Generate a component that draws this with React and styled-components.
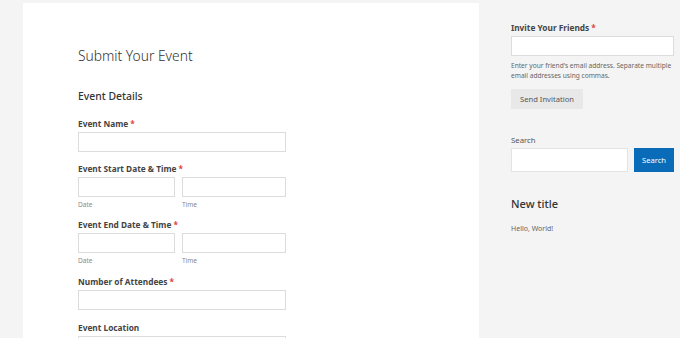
import React from "react";
import styled, { createGlobalStyle } from "styled-components";

const Global = createGlobalStyle`
  html, body { margin: 0; padding: 0; background: #f4f4f4; }
  body { font-family: "Noto Sans", "Open Sans", sans-serif; color: #333; }
  * { box-sizing: border-box; }
`;

const Page = styled.div`
  display: flex;
  height: 338px;
  overflow: hidden;
  padding: 3px 0 0 23px;
`;

const Main = styled.main`
  width: 456px;
  background: #fff;
  padding: 43px 0 0 55px;
`;

const Title = styled.h1`
  margin: 0;
  font-size: 13.8px;
  font-weight: 300;
  color: #333;
  line-height: 20px;
`;

const SectionTitle = styled.h2`
  margin: 22px 0 0;
  font-size: 10.4px;
  font-weight: 500;
  color: #333;
  line-height: 16px;
`;

const Field = styled.div`
  margin-top: ${(p) => p.$top || 11}px;
  width: 208px;
`;

const Label = styled.label`
  display: block;
  font-size: 8.3px;
  font-weight: 700;
  color: #444;
  line-height: 10px;
  margin-bottom: 3px;
`;

const Req = styled.span`
  color: #e0403a;
  margin-left: 2px;
`;

const Input = styled.div`
  height: 20px;
  width: ${(p) => p.$w || "100%"};
  background: #fff;
  border: 1px solid #dcdcdc;
`;

const Pair = styled.div`
  display: flex;
  gap: 7px;
`;

const Sub = styled.div`
  flex: ${(p) => (p.$grow ? "1" : "0 0 97px")};
`;

const Hint = styled.div`
  font-size: 6.5px;
  color: #8a8a8a;
  line-height: 9px;
  margin-top: 3px;
`;

const Side = styled.aside`
  padding: 20px 0 0 32px;
  width: 196px;
`;

const SideLabel = styled.div`
  font-size: 8.3px;
  font-weight: 700;
  color: #444;
  line-height: 10px;
  margin-bottom: 3px;
`;

const SideText = styled.p`
  margin: 5px 0 0;
  font-size: 6.6px;
  color: #666;
  line-height: 10px;
`;

const GrayButton = styled.button`
  margin-top: 8px;
  height: 20px;
  width: 72px;
  padding: 0;
  border: none;
  background: #e8e8e8;
  font-family: inherit;
  font-size: 7.6px;
  color: #555;
`;

const SearchLabel = styled.div`
  margin-top: 26px;
  font-size: 7.8px;
  color: #555;
  line-height: 11px;
  margin-bottom: 2px;
`;

const SearchRow = styled.div`
  display: flex;
  gap: 6px;
`;

const SearchInput = styled.div`
  width: 117px;
  height: 24px;
  background: #fff;
  border: 1px solid #e4e4e4;
`;

const BlueButton = styled.button`
  width: 40px;
  height: 24px;
  padding: 0;
  border: none;
  background: #0a6bb8;
  color: #fff;
  font-family: inherit;
  font-size: 7.6px;
`;

const WidgetTitle = styled.h3`
  margin: 24px 0 0;
  font-size: 11px;
  font-weight: 500;
  color: #333;
  line-height: 16px;
`;

const Hello = styled.p`
  margin: 12px 0 0;
  font-size: 7px;
  line-height: 10px;
  color: #666;
`;

const DateTime = ({ label, top }) => (
  <Field $top={top}>
    <Label>
      {label}
      <Req>*</Req>
    </Label>
    <Pair>
      <Sub>
        <Input />
        <Hint>Date</Hint>
      </Sub>
      <Sub $grow>
        <Input />
        <Hint>Time</Hint>
      </Sub>
    </Pair>
  </Field>
);

export default function App() {
  return (
    <>
      <Global />
      <Page>
        <Main>
          <Title>Submit Your Event</Title>
          <SectionTitle>Event Details</SectionTitle>
          <Field $top={15}>
            <Label>
              Event Name<Req>*</Req>
            </Label>
            <Input />
          </Field>
          <DateTime label="Event Start Date & Time" top={12} />
          <DateTime label="Event End Date & Time" top={11} />
          <Field $top={12}>
            <Label>
              Number of Attendees<Req>*</Req>
            </Label>
            <Input />
          </Field>
          <Field $top={13}>
            <Label>Event Location</Label>
            <Input />
          </Field>
        </Main>
        <Side>
          <SideLabel>
            Invite Your Friends<Req>*</Req>
          </SideLabel>
          <Input $w="163px" />
          <SideText>
            Enter your friend's email address. Separate multiple email
            addresses using commas.
          </SideText>
          <GrayButton>Send Invitation</GrayButton>
          <SearchLabel>Search</SearchLabel>
          <SearchRow>
            <SearchInput />
            <BlueButton>Search</BlueButton>
          </SearchRow>
          <WidgetTitle>New title</WidgetTitle>
          <Hello>Hello, World!</Hello>
        </Side>
      </Page>
    </>
  );
}
